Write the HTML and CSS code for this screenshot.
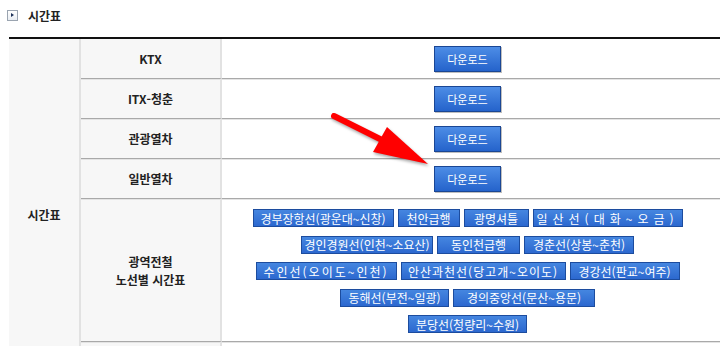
FILE: index.html
```html
<!DOCTYPE html>
<html lang="ko">
<head>
    <meta charset="UTF-8">
    <meta name="viewport" content="width=device-width, initial-scale=1.0">
    <title>시간표</title>
    <link rel="stylesheet" href="styles.css">
</head>
<body>
    <div class="page">
        <h3 class="sec-title"><span class="bullet"></span>시간표</h3>
        <table class="tt">
            <tr class="r-first">
                <th rowspan="6" class="grp">시간표</th>
                <th class="kind">KTX</th>
                <td class="dl"><a class="btn-dl">다운로드</a></td>
            </tr>
            <tr>
                <th class="kind">ITX-청춘</th>
                <td class="dl"><a class="btn-dl">다운로드</a></td>
            </tr>
            <tr>
                <th class="kind">관광열차</th>
                <td class="dl"><a class="btn-dl">다운로드</a></td>
            </tr>
            <tr>
                <th class="kind">일반열차</th>
                <td class="dl"><a class="btn-dl">다운로드</a></td>
            </tr>
            <tr class="r-lines">
                <th class="kind">광역전철<br>노선별 시간표</th>
                <td class="lines">
                    <div class="line-row">
                        <a class="btn-line w141">경부장항선(광운대~신창)</a>
                        <a class="btn-line w62">천안급행</a>
                        <a class="btn-line w65">광명셔틀</a>
                        <a class="btn-line w150 ls5">일산선(대화~오금)</a>
                    </div>
                    <div class="line-row">
                        <a class="btn-line w132">경인경원선(인천~소요산)</a>
                        <a class="btn-line w83">동인천급행</a>
                        <a class="btn-line w110">경춘선(상봉~춘천)</a>
                    </div>
                    <div class="line-row">
                        <a class="btn-line w141 ls2">수인선(오이도~인천)</a>
                        <a class="btn-line w165 ls1">안산과천선(당고개~오이도)</a>
                        <a class="btn-line w110">경강선(판교~여주)</a>
                    </div>
                    <div class="line-row">
                        <a class="btn-line w109">동해선(부전~일광)</a>
                        <a class="btn-line w142">경의중앙선(문산~용문)</a>
                    </div>
                    <div class="line-row">
                        <a class="btn-line w119">분당선(청량리~수원)</a>
                    </div>
                </td>
            </tr>
            <tr class="r-more">
                <th class="kind">&nbsp;</th>
                <td></td>
            </tr>
        </table>

        <!-- red pointer drawn over the table -->
        <svg class="arrow" width="720" height="346" viewBox="0 0 720 346">
            <line x1="334" y1="116" x2="382" y2="140" stroke="#f00" stroke-width="6" stroke-linecap="round"/>
            <polygon points="387,127 373,152 428,164" fill="#f00"/>
        </svg>
    </div>
</body>
</html>
```

FILE: styles.css
```css
html, body { margin: 0; overflow: hidden; }
body { font-family: "Noto Sans CJK KR", "Noto Sans", sans-serif; font-size: 12px; color: #333; background: #fff; }
.page { position: relative; width: 720px; height: 346px; overflow: hidden; }

.sec-title { margin: 0 0 7px 0; height: 30px; padding-left: 7px; display: flex; align-items: center; font-size: 12px; font-weight: bold; color: #222; }
.bullet { position: relative; width: 9px; height: 9px; margin-right: 10px; border: 1px solid #9aa4b0; background: linear-gradient(#fff, #e9edf2); }
.bullet::after { content: ""; position: absolute; left: 3px; top: 2px; border-left: 3px solid #1d3158; border-top: 2.5px solid transparent; border-bottom: 2.5px solid transparent; }

.tt { margin-left: 9px; width: 711px; border-collapse: separate; border-spacing: 0; border-top: 2px solid #111; table-layout: fixed; }
.tt th, .tt td { padding: 0; box-sizing: border-box; border-top: 1px solid #e4e4e4; border-bottom: 1px solid #a9a9a9; }
.tt .r-first th, .tt .r-first td { border-top: none; }
.tt tr { height: 40px; }
.tt .r-more { height: 48px; }

.grp { width: 72px; background: #f7f7f7; border-right: 2px solid #e2e2e2; font-weight: bold; color: #222; vertical-align: middle; }
.tt th.grp { border-top: none; border-bottom: none; }
.kind { width: 141px; background: #f7f7f7; border-right: 2px solid #e2e2e2; font-weight: bold; color: #222; line-height: 18px; text-align: center; }
.dl { text-align: center; padding-right: 7px !important; }

.btn-dl { display: inline-flex; align-items: center; justify-content: center; width: 67px; height: 26px; box-sizing: border-box; border: 1px solid #1a4694; background: linear-gradient(#4d8de6, #2563cb); box-shadow: 1px 1px 0 rgba(0,0,0,0.25); color: #fff; font-size: 11px; vertical-align: middle; }

.lines { padding: 9px 7px 8px 0 !important; }
.line-row { display: flex; justify-content: center; gap: 4px; margin-bottom: 8.5px; }
.line-row:last-child { margin-bottom: 0; }
.btn-line { display: inline-flex; align-items: center; justify-content: center; height: 18px; box-sizing: border-box; border: 1px solid #1c4c9e; background: linear-gradient(#4586e0, #2c68cf); color: #fff; font-size: 12px; white-space: nowrap; }
.ls1 { letter-spacing: 1px; }
.ls2 { letter-spacing: 2px; }
.ls5 { letter-spacing: 5px; }
.w62 { width: 62px; }
.w65 { width: 65px; }
.w83 { width: 83px; }
.w109 { width: 109px; }
.w110 { width: 110px; }
.w119 { width: 119px; }
.w132 { width: 132px; }
.w141 { width: 141px; }
.w142 { width: 142px; }
.w150 { width: 150px; }
.w165 { width: 165px; }

.arrow { position: absolute; left: 0; top: 0; pointer-events: none; filter: drop-shadow(1px 2px 1.5px rgba(0,0,0,0.35)); }
```
